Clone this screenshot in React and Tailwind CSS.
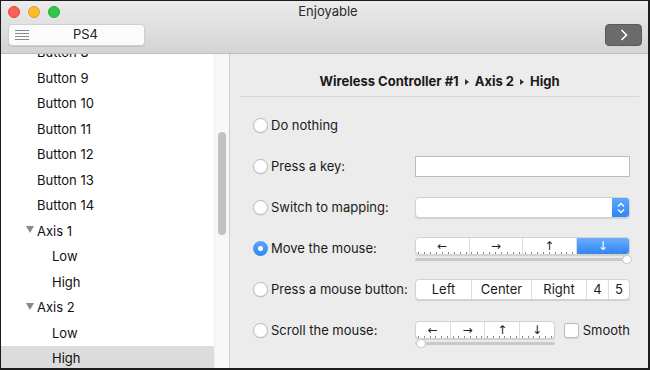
import React from "react";

const F = { fontFamily: "Inter, 'Noto Sans', sans-serif" };

function Ticks({ n }) {
  return (
    <div className="flex justify-between px-[3px] h-[3px] -mt-[3px] relative">
      {Array.from({ length: n }).map((_, i) => (
        <span key={i} className="w-px h-[2px] bg-[#8a8a8a]" />
      ))}
    </div>
  );
}

function Track({ knob }) {
  return (
    <div className="relative mt-[3px] h-[3px] rounded-full bg-[#c9c9c9]">
      <span
        className={`absolute top-[-3px] w-[10px] h-[9px] rounded-full bg-white border border-[#c4c4c4] ${
          knob === "right" ? "right-[-2px]" : "left-[1px]"
        }`}
      />
    </div>
  );
}

function ArrowSeg({ items, active, h }) {
  return (
    <div className={`flex ${h} rounded-[4px] bg-white border border-[#d2d2d2] shadow-[0_1px_1px_rgba(0,0,0,0.12)] overflow-hidden`}>
      {items.map((a, i) => (
        <div
          key={i}
          className={`flex-1 flex items-center justify-center text-[12px] leading-none ${
            i > 0 ? "border-l border-[#dedede]" : ""
          } ${active === i ? "bg-gradient-to-b from-[#6aaffc] to-[#2b85f7] text-white" : "text-[#222]"}`}
          style={{ fontFamily: "'DejaVu Sans', sans-serif" }}
        >
          {a}
        </div>
      ))}
    </div>
  );
}

function Radio({ on }) {
  return on ? (
    <span className="w-[15px] h-[15px] rounded-full bg-gradient-to-b from-[#5aa5fb] to-[#2f86f5] flex items-center justify-center shrink-0">
      <span className="w-[5px] h-[5px] rounded-full bg-white" />
    </span>
  ) : (
    <span className="w-[15px] h-[15px] rounded-full bg-white border border-[#b9b9b9] shadow-[0_0.5px_1px_rgba(0,0,0,0.1)] shrink-0" />
  );
}

function Row({ label, on, children }) {
  return (
    <div className="flex items-center h-[41px]">
      <div className="w-[162px] flex items-center gap-[3px] text-[13px] text-[#1a1a1a]">
        <Radio on={on} />
        <span>{label}</span>
      </div>
      <div className="w-[215px]">{children}</div>
    </div>
  );
}

const sidebar = [
  { t: "Button 8", k: "b" },
  { t: "Button 9", k: "b" },
  { t: "Button 10", k: "b" },
  { t: "Button 11", k: "b" },
  { t: "Button 12", k: "b" },
  { t: "Button 13", k: "b" },
  { t: "Button 14", k: "b" },
  { t: "Axis 1", k: "a" },
  { t: "Low", k: "s" },
  { t: "High", k: "s" },
  { t: "Axis 2", k: "a" },
  { t: "Low", k: "s" },
  { t: "High", k: "s", sel: true },
];

function Sep() {
  return (
    <svg width="4" height="6" viewBox="0 0 4 6" className="mx-[6px] mb-[4px]">
      <path d="M0 0 L4 3 L0 6 Z" fill="#333" />
    </svg>
  );
}

export default function App() {
  return (
    <div
      className="w-[650px] h-[370px] overflow-hidden flex flex-col border-l border-t border-[#1c1c1c] border-r-2 border-b-2 bg-[#ececec]"
      style={F}
    >
      {/* title + toolbar */}
      <div className="h-[53px] shrink-0 flex flex-col bg-gradient-to-b from-[#ebebeb] to-[#d4d4d4] border-b border-[#bdbdbd]">
        <div className="h-[22px] flex items-center relative">
          <div className="flex items-center gap-[8px] pl-[7px]">
            <span className="w-[12px] h-[12px] rounded-full bg-[#fc5f57] border border-[#e2463f]" />
            <span className="w-[12px] h-[12px] rounded-full bg-[#fdbc2e] border border-[#e0a028]" />
            <span className="w-[12px] h-[12px] rounded-full bg-[#33c748] border border-[#27aa35]" />
          </div>
          <div className="flex-1 text-center text-[13px] text-[#2a2a2a] pr-[52px]">Enjoyable</div>
        </div>
        <div className="flex items-center justify-between pl-[7px] pr-[6px] pt-[1px]">
          <div className="w-[137px] h-[22px] rounded-[4px] bg-[#fbfbfb] border border-[#cfcfcf] shadow-[0_1px_1px_rgba(0,0,0,0.1)] flex items-center">
            <svg width="14" height="10" viewBox="0 0 14 10" className="ml-[6px]">
              <g stroke="#8a8a8a" strokeWidth="1">
                <line x1="0" y1="0.5" x2="14" y2="0.5" />
                <line x1="0" y1="3.5" x2="14" y2="3.5" />
                <line x1="0" y1="6.5" x2="14" y2="6.5" />
                <line x1="0" y1="9.5" x2="14" y2="9.5" />
              </g>
            </svg>
            <span className="flex-1 text-center text-[13px] text-[#222] pr-[2px]">PS4</span>
          </div>
          <div className="w-[37px] h-[22px] rounded-[4px] bg-[#6b6b6b] border border-[#5a5a5a] flex items-center justify-center">
            <svg width="8" height="12" viewBox="0 0 8 12">
              <path d="M1.5 1 L6.5 6 L1.5 11" fill="none" stroke="white" strokeWidth="1.6" />
            </svg>
          </div>
        </div>
      </div>

      {/* main */}
      <div className="flex flex-1 min-h-0">
        <div className="w-[213px] bg-white overflow-hidden">
          <div className="mt-[-14px]">
            {sidebar.map((r, i) => (
              <div
                key={i}
                className={`h-[25.5px] flex items-center text-[13px] text-[#111] ${
                  r.sel ? "bg-[#dcdcdc]" : ""
                } ${r.k === "b" ? "pl-[36px]" : r.k === "s" ? "pl-[51px]" : "pl-[25px]"}`}
              >
                {r.k === "a" && (
                  <svg width="8" height="7" viewBox="0 0 8 7" className="mr-[3px] -mt-[3px]">
                    <path d="M0 0 H8 L4 7 Z" fill="#8a8a8a" />
                  </svg>
                )}
                {r.t}
              </div>
            ))}
          </div>
        </div>
        <div className="w-[16px] bg-[#f8f8f8] border-l border-[#efefef] border-r border-r-[#cfcfcf] flex justify-center">
          <div className="w-[8px] h-[103px] mt-[78px] rounded-full bg-[#c2c2c2]" />
        </div>

        <div className="flex-1 flex flex-col">
          <div className="h-[43px] mx-[10px] mr-[9px] border-b border-[#d7d7d7] flex items-end justify-center pb-[7px] text-[13px] font-bold text-[#1a1a1a] leading-[16px]">
            <span>Wireless Controller #1</span>
            <Sep />
            <span>Axis 2</span>
            <Sep />
            <span>High</span>
          </div>
          <div className="pt-[8px] pl-[23px] flex flex-col">
            <Row label="Do nothing" />
            <Row label="Press a key:">
              <div className="h-[21px] bg-white border border-[#bdbdbd]" />
            </Row>
            <Row label="Switch to mapping:">
              <div className="h-[21px] rounded-[4px] bg-white border border-[#d0d0d0] shadow-[0_1px_1px_rgba(0,0,0,0.12)] flex justify-end overflow-hidden">
                <div className="w-[17px] h-full bg-gradient-to-b from-[#5ea7fb] to-[#2d85f6] flex items-center justify-center">
                  <svg width="8" height="12" viewBox="0 0 8 12">
                    <path d="M1 4.5 L4 1.5 L7 4.5 M1 7.5 L4 10.5 L7 7.5" fill="none" stroke="white" strokeWidth="1.3" />
                  </svg>
                </div>
              </div>
            </Row>
            <Row label="Move the mouse:" on>
              <div className="pt-[1px]">
                <ArrowSeg items={["←", "→", "↑", "↓"]} active={3} h="h-[18px]" />
                <Ticks n={36} />
                <Track knob="right" />
              </div>
            </Row>
            <Row label="Press a mouse button:">
              <div className="flex h-[21px] rounded-[4px] bg-white border border-[#d2d2d2] shadow-[0_1px_1px_rgba(0,0,0,0.12)] overflow-hidden text-[13px] text-[#1a1a1a]">
                <div className="w-[55px] flex items-center justify-center">Left</div>
                <div className="w-[60px] flex items-center justify-center border-l border-[#dedede]">Center</div>
                <div className="w-[55px] flex items-center justify-center border-l border-[#dedede]">Right</div>
                <div className="w-[22px] flex items-center justify-center border-l border-[#dedede]">4</div>
                <div className="flex-1 flex items-center justify-center border-l border-[#dedede]">5</div>
              </div>
            </Row>
            <Row label="Scroll the mouse:">
              <div className="flex items-start">
                <div className="w-[142px] pt-[4px]">
                  <ArrowSeg items={["←", "→", "↑", "↓"]} h="h-[18px]" />
                  <Ticks n={24} />
                  <Track knob="left" />
                </div>
                <div className="flex items-center gap-[4px] ml-[9px] mt-[4px] text-[13px] text-[#1a1a1a]">
                  <span className="w-[15px] h-[15px] rounded-[3px] bg-white border border-[#bdbdbd] shadow-[0_0.5px_1px_rgba(0,0,0,0.1)]" />
                  <span>Smooth</span>
                </div>
              </div>
            </Row>
          </div>
        </div>
      </div>
    </div>
  );
}
